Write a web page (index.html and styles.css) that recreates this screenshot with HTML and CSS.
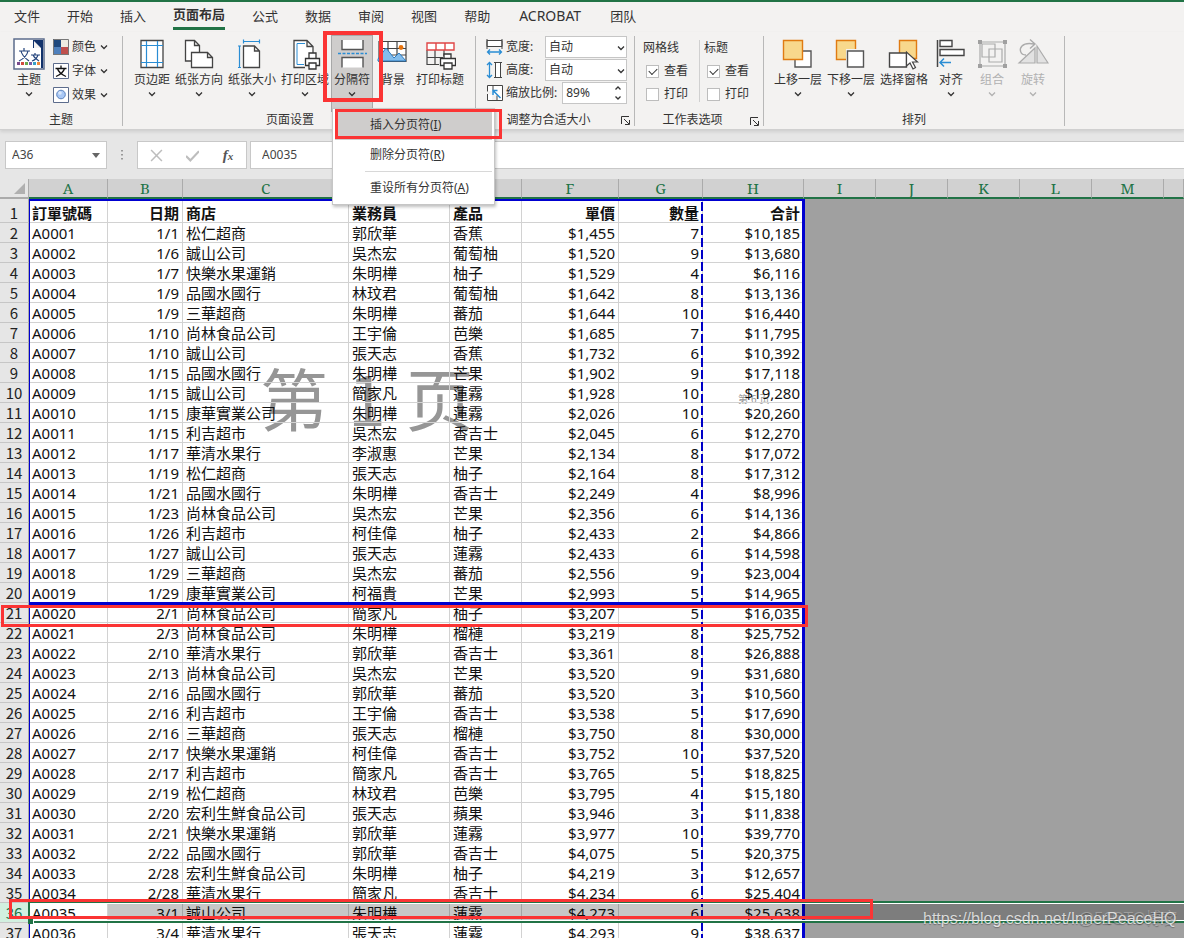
FILE: index.html
```html
<!DOCTYPE html>
<html lang="zh-CN">
<head>
<meta charset="utf-8">
<title>工作表 - 分页预览</title>
<link rel="stylesheet" href="styles.css">
</head>
<body>
<svg class="defs" aria-hidden="true">
  <symbol id="chev" viewBox="0 0 8 6"><path d="M1 1.5l3 3 3-3" fill="none" stroke="currentColor" stroke-width="1.3"/></symbol>
  <symbol id="launch" viewBox="0 0 9 9"><path d="M.5 8V.5H8M3 3l5 5M8.500 4v4.500H4" fill="none" stroke="currentColor"/></symbol>
</svg>
<div class="app">
  <nav class="tabs">
    <button class="tab">文件</button>
    <button class="tab">开始</button>
    <button class="tab">插入</button>
    <button class="tab active">页面布局</button>
    <button class="tab">公式</button>
    <button class="tab">数据</button>
    <button class="tab">审阅</button>
    <button class="tab">视图</button>
    <button class="tab">帮助</button>
    <button class="tab latin">ACROBAT</button>
    <button class="tab">团队</button>
  </nav>

  <div class="ribbon">
    <section class="group g-theme">
      <div class="tools">
        <button class="big">
          <svg class="ico" viewBox="0 0 32 32"><rect x="1" y="1" width="30" height="30" fill="#fff" stroke="#5c6c8c" stroke-width="1.500"/><path d="M20 2h10v28h-2V10h-8z" fill="#12326b"/><path d="M21 3v7h7z" fill="#f3f2f1"/><path d="M6 13h11M11 10v3M8 13c1 5 4 7 8 10M15 13c-1 5-5 8-9 10M18 17h9M22 15v2M20 17c1 3 3 4 6 6M25 17c-1 3-3 5-6 6" fill="none" stroke="#24447c" stroke-width="1.200"/><path d="M4 24h3v3H4z" fill="#7a4a8c"/><path d="M8 24h3v3H8z" fill="#d24a40"/><path d="M12 24h3v3h-3z" fill="#6aa84f"/><path d="M16 24h3v3h-3z" fill="#7a5aa8"/><path d="M20 24h3v3h-3z" fill="#38a0c8"/><path d="M24 24h3v3h-3z" fill="#f0883a"/></svg>
          <span>主题</span><svg class="chev"><use href="#chev"/></svg>
        </button>
        <div class="stack">
          <button class="small"><svg class="ico16" viewBox="0 0 16 16"><path d="M0 0h8v8H0z" fill="#1f497d"/><path d="M8 0h8v8H8z" fill="#eeece1"/><path d="M0 8h8v8H0z" fill="#4f81bd"/><path d="M8 8h8v8H8z" fill="#c0504d"/><path d="M.5.5h15v15H.5z" fill="none" stroke="#777"/></svg><span>颜色</span><svg class="chev"><use href="#chev"/></svg></button>
          <button class="small"><svg class="ico16" viewBox="0 0 16 16"><path d="M.5.5h15v15H.5z" fill="#fff" stroke="#5c6c8c"/><path d="M2.500 5.500h11M8 2.500v3M4.500 5.500c1 4 4 6 8.500 8M11.500 5.500c-1 4-4 6-8.500 8" fill="none" stroke="#111" stroke-width="1.300"/></svg><span>字体</span><svg class="chev"><use href="#chev"/></svg></button>
          <button class="small"><svg class="ico16" viewBox="0 0 16 16"><path d="M.5.5h15v15H.5z" fill="#fff" stroke="#5c6c8c"/><circle cx="8" cy="7.500" r="4.300" fill="#a9c8f5" stroke="#5b82bd"/><circle cx="7" cy="6" r="1.800" fill="#d9e8fc"/></svg><span>效果</span><svg class="chev"><use href="#chev"/></svg></button>
        </div>
      </div>
      <div class="caption"><span>主题</span></div>
    </section>

    <section class="group g-page">
      <div class="tools">
        <button class="big"><svg class="ico" viewBox="0 0 32 32"><path d="M5 2.500h22v27H5z" fill="#fff" stroke="#444" stroke-width="1.300"/><path d="M10.500 3v26M21.500 3v26M5 7.500h22M5 24.500h22" stroke="#2a8dd4" stroke-width="1.200"/></svg><span>页边距</span><svg class="chev"><use href="#chev"/></svg></button>
        <button class="big"><svg class="ico" viewBox="0 0 32 32"><g fill="#fff" stroke="#444" stroke-width="1.300"><path d="M8 23H2.500V2.500h9l5 5V14M11.500 2.500v5h5"/><path d="M8.500 14.500h16l5 5v10h-21zM24.500 14.500v5h5"/></g></svg><span>纸张方向</span><svg class="chev"><use href="#chev"/></svg></button>
        <button class="big"><svg class="ico" viewBox="0 0 32 32"><path d="M7.500 8h11l5 5v16.500h-16zM18.500 8v5h5" fill="#fff" stroke="#444" stroke-width="1.300"/><path d="M7.500 3.500h16M7.500 1.500v4M23.500 1.500v4M3.500 8v21M2 8h3M2 29.500h3" fill="none" stroke="#2a8dd4" stroke-width="1.200"/></svg><span>纸张大小</span><svg class="chev"><use href="#chev"/></svg></button>
        <button class="big"><svg class="ico" viewBox="0 0 32 32"><path d="M16 29.500H5V2.500h13l6 6V16M18 2.500v6h6" fill="#fff" stroke="#444" stroke-width="1.300"/><path d="M15 26.500H8v-21h8" fill="none" stroke="#2a8dd4"/><g fill="#fff" stroke="#333" stroke-width="1.300"><path d="M20 20v-5h7v5"/><path d="M16.500 20.500h14v7h-14z"/><path d="M20 25h7v6h-7z"/></g></svg><span>打印区域</span><svg class="chev"><use href="#chev"/></svg></button>
        <button class="big pressed"><svg class="ico" viewBox="0 0 32 32"><path d="M6 2v9.500h21V2M6 29.500V19.500h21v10" fill="#fff" stroke="#555" stroke-width="1.400"/><path d="M2 15.500h29" stroke="#2a8dd4" stroke-width="1.300" stroke-dasharray="3 1.500"/></svg><span>分隔符</span><svg class="chev"><use href="#chev"/></svg></button>
        <button class="big back"><svg class="ico" viewBox="0 0 32 32"><path d="M2 3.500h27v20H2zM11 3v20M20 3v20M2 10.500h27M2 17h27" fill="#fff" stroke="#444" stroke-width="1.200"/><path d="M1 21l8-11 8 10 5-5 7 8H1z" fill="#83bdec" stroke="#2a7bc0"/><circle cx="24" cy="9.500" r="2.400" fill="#e8730c"/></svg><span>背景</span></button>
        <button class="big"><svg class="ico" viewBox="0 0 32 32"><path d="M3 12v14.500h12M11 12v14M3 19.500h16M20 12v6" fill="none" stroke="#444" stroke-width="1.200"/><path d="M3 5h27v7H3zM12 5v7M21 5v7" fill="#fff" stroke="#e04646" stroke-width="1.400"/><g fill="#fff" stroke="#333" stroke-width="1.300"><path d="M20 20v-4h7v4"/><path d="M16.500 20.500h15v7h-15z"/><path d="M20 25h8v6h-8z"/></g></svg><span>打印标题</span></button>
      </div>
      <div class="caption"><span>页面设置</span></div>
    </section>

    <section class="group g-fit">
      <div class="fit">
        <div class="field"><svg class="ico18" viewBox="0 0 18 18"><path d="M1 8.500V2.500h15v6zM1 1v10M16 1v10" fill="#fff" stroke="#444"/><path d="M1.500 14h14M4 11.500L1.500 14 4 16.500M13 11.500l2.500 2.500-2.500 2.500" fill="none" stroke="#2a8dd4" stroke-width="1.300"/></svg><label for="w">宽度:</label><span class="pick"><select id="w"><option>自动</option></select><svg class="chev"><use href="#chev"/></svg></span></div>
        <div class="field"><svg class="ico18" viewBox="0 0 18 18"><path d="M8 1.500h8M8 16.500h8M9.500 1.500h5v15h-5z" fill="#fff" stroke="#444"/><path d="M3.500 1.500v15M1 4l2.500-2.500L6 4M1 14l2.500 2.500L6 14" fill="none" stroke="#2a8dd4" stroke-width="1.300"/></svg><label for="h">高度:</label><span class="pick"><select id="h"><option>自动</option></select><svg class="chev"><use href="#chev"/></svg></span></div>
        <div class="field"><svg class="ico18" viewBox="0 0 18 18"><path d="M6 1.500h10.500v15H6M1.500 7.500V1.500H7v5M1.500 10v6.500H11v-5" fill="#fff" stroke="#444"/><path d="M14.500 14L7 6.500M7 11V6.500h4.500" fill="none" stroke="#2a8dd4" stroke-width="1.500"/></svg><label for="s">缩放比例:</label><span class="pick"><input id="s" value="89%"><svg class="spin" viewBox="0 0 8 16"><path d="M1.500 4.500L4 2l2.500 2.500M1.500 11.500L4 14l2.500-2.500" fill="none" stroke="#333" stroke-width="1.300"/></svg></span></div>
      </div>
      <div class="caption"><span>调整为合适大小</span><button class="launch" aria-label="页面设置"><svg><use href="#launch"/></svg></button></div>
    </section>

    <section class="group g-opts">
      <div class="opts">
        <div class="optcol"><span>网格线</span><label><input type="checkbox" checked>查看</label><label><input type="checkbox">打印</label></div>
        <div class="optcol"><span>标题</span><label><input type="checkbox" checked>查看</label><label><input type="checkbox">打印</label></div>
      </div>
      <div class="caption"><span>工作表选项</span><button class="launch" aria-label="工作表选项"><svg><use href="#launch"/></svg></button></div>
    </section>

    <section class="group g-arr">
      <div class="tools">
        <button class="big"><svg class="ico" viewBox="0 0 32 32"><path d="M13 13h16v16H13z" fill="#fff" stroke="#555" stroke-width="1.400"/><path d="M1.500 2.500h19v19h-19z" fill="#f8d88c" stroke="#e07b12" stroke-width="1.400"/></svg><span>上移一层</span><svg class="chev"><use href="#chev"/></svg></button>
        <button class="big"><svg class="ico" viewBox="0 0 32 32"><path d="M1.500 2.500h19v19h-19z" fill="#f8d88c" stroke="#e07b12" stroke-width="1.400"/><path d="M11 11h19v20H11z" fill="#f3f2f1"/><path d="M12.500 13h16v16h-16z" fill="#fff" stroke="#555" stroke-width="1.400"/></svg><span>下移一层</span><svg class="chev"><use href="#chev"/></svg></button>
        <button class="big"><svg class="ico" viewBox="0 0 32 32"><path d="M11.500 2.500h17v18h-17z" fill="#f8d88c" stroke="#e07b12" stroke-width="1.400"/><path d="M1.500 15h17v14h-17z" fill="#fff" stroke="#444" stroke-width="1.400"/><path d="M18.500 14v14l3.500-3 3 6 2.500-1.500-3-5.500h5z" fill="#fff" stroke="#444" stroke-width="1.200"/></svg><span>选择窗格</span></button>
        <button class="big"><svg class="ico" viewBox="0 0 32 32"><path d="M2.500 2v27" stroke="#444" stroke-width="1.500"/><path d="M5 2.500h12v6H5zM5 11.500h24v6H5z" fill="#fff" stroke="#444" stroke-width="1.400"/><path d="M16 24.500H5M9 20.500l-4 4 4 4" fill="none" stroke="#2a8dd4" stroke-width="1.500"/></svg><span>对齐</span><svg class="chev"><use href="#chev"/></svg></button>
        <button class="big" disabled><svg class="ico" viewBox="0 0 32 32"><path d="M4 4h25v24H4zM6 6h13v13H6zM13 11h13v13H13z" fill="none" stroke="#ababab" stroke-width="1.200"/><path d="M2 2h4v4H2zM27 2h4v4h-4zM2 26h4v4H2zM27 26h4v4h-4z" fill="#a0a0a0"/></svg><span>组合</span><svg class="chev"><use href="#chev"/></svg></button>
        <button class="big" disabled><svg class="ico" viewBox="0 0 32 32"><path d="M2 25l16-15v15zM20 8l11 17H20z" fill="#e2e2e2" stroke="#ababab" stroke-width="1.200"/><path d="M9 17c-6 0-7-6-4-9s7-3 12-2M13 1.500l5 4.500-5 4.500" fill="none" stroke="#ababab" stroke-width="1.400"/></svg><span>旋转</span><svg class="chev"><use href="#chev"/></svg></button>
      </div>
      <div class="caption"><span>排列</span></div>
    </section>
  </div>

  <div class="formula">
    <div class="namebox"><input aria-label="名称框" value="A36"><svg viewBox="0 0 8 5"><path d="M0 0h8L4 5z" fill="#666"/></svg></div>
    <svg class="dots" viewBox="0 0 2 12"><path d="M0 1h2v1.500H0zM0 5h2v1.500H0zM0 9h2v1.500H0z" fill="#999"/></svg>
    <div class="fxbox">
      <button aria-label="取消"><svg viewBox="0 0 12 12"><path d="M1 1l10 10M11 1L1 11" stroke="#bdbdbd" stroke-width="1.400"/></svg></button>
      <button aria-label="输入"><svg viewBox="0 0 12 12"><path d="M0 6.500l4 4L12 2" fill="none" stroke="#bdbdbd" stroke-width="2"/></svg></button>
      <button class="fx" aria-label="插入函数">f<small>x</small></button>
    </div>
    <input class="content" aria-label="编辑栏" value="A0035">
  </div>

  <main class="sheet">
    <span class="mark mark-1"><span>第</span><span>1</span><span>页</span></span>
    <span class="mark mark-6"><span>第</span><span>6</span><span>页</span></span>
    <table class="grid">
      <colgroup><col class="c-n"><col class="c-a"><col class="c-b"><col class="c-c"><col class="c-d"><col class="c-e"><col class="c-f"><col class="c-g"><col class="c-h"><col class="c-i"><col class="c-i"><col class="c-i"><col class="c-i"><col class="c-i"><col></colgroup>
      <thead><tr><th class="corner"><svg viewBox="0 0 11 11"><path d="M11 0v11H0z" fill="#b0b0b0"/></svg></th><th>A</th><th>B</th><th>C</th><th>D</th><th>E</th><th>F</th><th>G</th><th>H</th><th>I</th><th>J</th><th>K</th><th>L</th><th>M</th><th></th></tr></thead>
      <tbody id="rows"></tbody>
    </table>
    <div class="print-area"></div>
    <div class="page-break-v"></div>
    <div class="page-break-h"></div>
    <div class="selection"><i></i></div>
    <div class="hl hl-21"></div>
    <div class="hl hl-36"></div>
  </main>

  <div class="menu">
    <button class="hot">插入分页符(<u>I</u>)</button>
    <button>删除分页符(<u>R</u>)</button>
    <hr>
    <button>重设所有分页符(<u>A</u>)</button>
  </div>
  <div class="hl hl-button"></div>
  <div class="hl hl-menu"></div>
  <span class="credit credit-b">@51CTO博客</span>
  <span class="credit">https://blog.csdn.net/InnerPeaceHQ</span>
</div>
<script src="app.js"></script>
</body>
</html>
```
FILE: styles.css
```css
* { box-sizing: border-box; }
body {
  margin: 0;
  height: 100vh;
  overflow: hidden;
  background: #a0a0a0;
  color: #333;
  font: 12px/16px "Noto Sans", "Noto Sans CJK SC", sans-serif;
}
button, input, select { font: inherit; color: inherit; border: 0; padding: 0; margin: 0; background: none; border-radius: 0; }
.defs { position: absolute; width: 0; height: 0; }
.app { position: relative; height: 100vh; overflow: hidden; }
.chev { width: 8px; height: 6px; flex: none; }

.tabs { display: flex; gap: 27px; height: 32px; padding: 0 14px; border-top: 2px solid #217346; background: #f3f2f1; font-size: 13px; align-items: stretch; }
.tab { padding-bottom: 2px; white-space: nowrap; }
.tab.latin { font-size: 14px; margin: 0 2px; }
.tab.active { font-weight: 700; border-bottom: 3px solid #217346; height: 28px; padding: 0; line-height: 25px; }

.ribbon { display: flex; height: 98px; padding-top: 4px; background: #f3f2f1; border-bottom: 1px solid #d0d0d0; box-shadow: 0 2px 3px #d0d0d0; position: relative; }
.group { display: flex; flex-direction: column; height: 90px; border-right: 1px solid #b8b8b8; flex: none; }
.g-theme { width: 123px; }
.g-page { width: 353px; }
.g-fit { width: 159px; }
.g-opts { width: 129px; }
.g-arr { width: 301px; }
.tools { display: flex; gap: 1px; height: 75px; padding-left: 8px; }
.g-page .tools { padding-left: 9px; }
.caption { display: flex; height: 15px; line-height: 18px; }
.caption span { flex: 1; text-align: center; white-space: nowrap; }
.g-page .caption { padding-right: 18px; }
.launch { width: 13px; height: 16px; padding-top: 5px; }
.launch svg { width: 9px; height: 9px; display: block; }
.big { display: flex; flex-direction: column; align-items: center; min-width: 40px; padding: 2px 2px 0; white-space: nowrap; }
.big .ico { width: 32px; height: 32px; flex: none; }
.big span { margin: 2px 0 3px; }
.big:disabled { color: #b1b1b1; }
.pressed { background: #cfcdcc; box-shadow: 0 0 0 1px #a8a8a8; }
.g-theme .tools { padding-left: 9px; }
.stack { display: flex; flex-direction: column; gap: 8px; padding: 3px 0 0 3px; }
.small { display: flex; align-items: center; gap: 3px; height: 16px; }
.small .chev { margin-left: 1px; }
.ico16 { width: 16px; height: 16px; }
.ico18 { width: 18px; height: 18px; margin-right: 2px; flex: none; }

.ribbon .fit { height: 75px; margin-top: -1px; padding: 0 7px 0 10px; display: flex; flex-direction: column; }
.g-fit .caption { height: 16px; line-height: 20px; }
.field { display: flex; align-items: center; height: 23px; white-space: nowrap; }
.field label { flex: none; margin-right: 5px; }
.pick { position: relative; margin-left: auto; display: flex; }
.pick select, .pick input { width: 82px; height: 22px; border: 1px solid #c6c6c6; background: #fff; appearance: none; padding: 0 3px; }
.pick input { width: 65px; }
.pick .chev { position: absolute; right: 2px; top: 9px; pointer-events: none; }
.spin { position: absolute; right: 5px; top: 3px; width: 8px; height: 16px; }

.opts { display: flex; height: 75px; padding: 4px 0 0 8px; }
.optcol { display: flex; flex-direction: column; gap: 7px; width: 56px; height: 62px; white-space: nowrap; }
.optcol + .optcol { border-left: 1px solid #d0d0d0; padding-left: 4px; width: 60px; }
.optcol label { display: flex; align-items: center; gap: 5px; padding-left: 3px; height: 16px; }
.optcol input { appearance: none; width: 13px; height: 13px; border: 1px solid #bdbdbd; background: #fff; display: grid; place-items: center; }
.optcol input:checked::before { content: ""; width: 7px; height: 4px; border: solid #333; border-width: 0 0 1px 1px; transform: translateY(-1px) rotate(-45deg); }

.formula { display: flex; height: 49px; padding: 11px 0 10px 5px; background: #e6e6e6; color: #444; }
.formula > div, .content { background: #fff; border: 1px solid #c8c8c8; }
.namebox { width: 102px; display: flex; align-items: center; padding: 0 6px; }
.namebox input { flex: 1; min-width: 0; }
.namebox svg { width: 8px; height: 5px; }
.dots { width: 2px; height: 12px; margin: 8px 14px; }
.fxbox { width: 110px; display: flex; align-items: center; justify-content: space-around; }
.fxbox button { width: 24px; }
.fxbox svg { width: 13px; height: 13px; display: block; margin: auto; }
.fxbox .fx { font: italic 700 15px/16px "Liberation Serif", serif; color: #555; }
.fx small { font-size: 11px; }
.content { flex: 1; margin-left: 3px; padding: 0 11px; border-right: 0; }

.sheet { position: relative; background: linear-gradient(90deg, #fff 804px, #a0a0a0 804px); font: 15px/18px "Noto Sans", "Noto Sans CJK TC", sans-serif; color: #111; }
.grid { position: relative; width: 100%; table-layout: fixed; border-collapse: separate; border-spacing: 0; }
.c-n { width: 29px; } .c-a { width: 79px; } .c-b { width: 75px; } .c-c { width: 166px; } .c-d { width: 101px; }
.c-e { width: 72px; } .c-f { width: 97px; } .c-g { width: 84px; } .c-h { width: 101px; } .c-i { width: 72px; }
.grid th, .grid td { padding: 0 3px; white-space: nowrap; overflow: hidden; text-align: left; height: 20px; }
.grid thead th { background: #d1d1d1; color: #217346; font: 400 15px/17px "Noto Serif", "Liberation Serif", serif; text-align: center; border-right: 1px solid #ababab; border-bottom: 2px solid #217346; height: 20px; padding-top: 1px; }
.grid thead .corner { background: #e6e6e6; text-align: right; border-bottom-color: #ababab; }
.corner svg { width: 11px; height: 11px; display: inline-block; }
.grid tbody td { border-right: 1px solid #d2d2d2; border-bottom: 1px solid #d2d2d2; }
.grid tbody th { background: #e6e6e6; color: #222; font: 400 15px/18px "Noto Sans CJK TC", sans-serif; text-align: center; border-right: 1px solid #ababab; border-bottom: 1px solid #c6c6c6; padding: 0; }
.grid tbody td.num { text-align: right; }
.grid tbody td.outside { border: 0; }
.grid .head td { font-weight: 700; height: 24px; padding-top: 5px; }
.grid tbody .head th { padding-top: 5px; }
.grid tbody .current th { background: #d2f0e0; color: #217346; }

.mark { position: absolute; display: flex; color: #969696; white-space: nowrap; font-family: "Noto Sans CJK SC", sans-serif; font-weight: 400; }
.mark-1 { left: 260px; top: 178px; gap: 20px; font-size: 68px; line-height: 80px; }
.mark-6 { left: 738px; top: 214px; gap: 3px; font-size: 10px; line-height: 12px; }
.print-area { position: absolute; left: 29px; top: 20px; width: 776px; bottom: 0; border: solid #0000d0; border-width: 2px 3px 0 1px; }
.page-break-v { position: absolute; left: 701px; top: 23px; width: 2px; bottom: 0; background: repeating-linear-gradient(#0000c8 0 9px, transparent 9px 12px); }
.page-break-h { position: absolute; left: 29px; top: 423px; width: 775px; height: 3px; background: #0000d0; }
.selection { position: absolute; left: 28px; right: 0; top: 722px; height: 22px; border: solid #217346; border-width: 2px 0 2px 2px; background: linear-gradient(90deg, transparent 78px, rgba(0, 0, 0, .22) 78px); box-shadow: inset 0 1px #fff, inset 0 -1px #fff; }
.selection i { position: absolute; left: -2px; bottom: -3px; width: 6px; height: 6px; background: #217346; border: solid #fff; border-width: 0 1px 0 0; }
.hl { position: absolute; border: 3px solid #fb3434; pointer-events: none; }
.hl-21 { left: 1px; top: 426px; width: 807px; height: 22px; }
.hl-36 { left: 9px; top: 720px; width: 864px; height: 20px; }
.hl-button { left: 323px; top: 31px; width: 60px; height: 71px; border-width: 4px; }
.hl-menu { left: 335px; top: 109px; width: 167px; height: 30px; }

.menu { position: absolute; left: 332px; top: 108px; width: 163px; padding: 1px 2px; display: flex; flex-direction: column; background: #fff; border: 1px solid #c6c6c6; box-shadow: 1px 2px 3px rgba(0, 0, 0, .25); }
.menu button { height: 30px; padding-left: 35px; text-align: left; white-space: nowrap; }
.menu .hot { background: #cfcdcc; }
.menu hr { width: 127px; margin: 1px 0; margin-left: auto; border: 0; border-top: 1px solid #d8d8d8; }
.credit { position: absolute; left: 923px; top: 909px; font: 16px/20px "Liberation Sans", sans-serif; color: rgba(255, 255, 255, .75); text-shadow: 0 1px 1px rgba(0, 0, 0, .3); white-space: nowrap; }
.credit-b { left: 1078px; font-family: "Liberation Sans", "Noto Sans CJK SC", sans-serif; color: rgba(225, 225, 225, .4); }
```
FILE: app.js
```javascript
const data = `訂單號碼|日期|商店|業務員|產品|單價|數量|合計
A0001|1/1|松仁超商|郭欣華|香蕉|$1,455|7|$10,185
A0002|1/6|誠山公司|吳杰宏|葡萄柚|$1,520|9|$13,680
A0003|1/7|快樂水果運銷|朱明樺|柚子|$1,529|4|$6,116
A0004|1/9|品國水國行|林玟君|葡萄柚|$1,642|8|$13,136
A0005|1/9|三華超商|朱明樺|蕃茄|$1,644|10|$16,440
A0006|1/10|尚林食品公司|王宇倫|芭樂|$1,685|7|$11,795
A0007|1/10|誠山公司|張天志|香蕉|$1,732|6|$10,392
A0008|1/15|品國水國行|朱明樺|芒果|$1,902|9|$17,118
A0009|1/15|誠山公司|簡家凡|蓮霧|$1,928|10|$19,280
A0010|1/15|康華實業公司|朱明樺|蓮霧|$2,026|10|$20,260
A0011|1/15|利吉超市|吳杰宏|香吉士|$2,045|6|$12,270
A0012|1/17|華清水果行|李淑惠|芒果|$2,134|8|$17,072
A0013|1/19|松仁超商|張天志|柚子|$2,164|8|$17,312
A0014|1/21|品國水國行|朱明樺|香吉士|$2,249|4|$8,996
A0015|1/23|尚林食品公司|吳杰宏|芒果|$2,356|6|$14,136
A0016|1/26|利吉超市|柯佳偉|柚子|$2,433|2|$4,866
A0017|1/27|誠山公司|張天志|蓮霧|$2,433|6|$14,598
A0018|1/29|三華超商|吳杰宏|蕃茄|$2,556|9|$23,004
A0019|1/29|康華實業公司|柯福貴|芒果|$2,993|5|$14,965
A0020|2/1|尚林食品公司|簡家凡|柚子|$3,207|5|$16,035
A0021|2/3|尚林食品公司|朱明樺|榴槤|$3,219|8|$25,752
A0022|2/10|華清水果行|郭欣華|香吉士|$3,361|8|$26,888
A0023|2/13|尚林食品公司|吳杰宏|芒果|$3,520|9|$31,680
A0024|2/16|品國水國行|郭欣華|蕃茄|$3,520|3|$10,560
A0025|2/16|利吉超市|王宇倫|香吉士|$3,538|5|$17,690
A0026|2/16|三華超商|張天志|榴槤|$3,750|8|$30,000
A0027|2/17|快樂水果運銷|柯佳偉|香吉士|$3,752|10|$37,520
A0028|2/17|利吉超市|簡家凡|香吉士|$3,765|5|$18,825
A0029|2/19|松仁超商|林玟君|芭樂|$3,795|4|$15,180
A0030|2/20|宏利生鮮食品公司|張天志|蘋果|$3,946|3|$11,838
A0031|2/21|快樂水果運銷|郭欣華|蓮霧|$3,977|10|$39,770
A0032|2/22|品國水國行|郭欣華|香吉士|$4,075|5|$20,375
A0033|2/28|宏利生鮮食品公司|朱明樺|柚子|$4,219|3|$12,657
A0034|2/28|華清水果行|簡家凡|香吉士|$4,234|6|$25,404
A0035|3/1|誠山公司|朱明樺|蓮霧|$4,273|6|$25,638
A0036|3/4|華清水果行|張天志|蓮霧|$4,293|9|$38,637`;

const numeric = new Set([1, 5, 6, 7]);
const body = document.getElementById("rows");

data.split("\n").forEach((line, index) => {
  const row = body.insertRow();
  if (index === 0) row.className = "head";
  if (index === 35) row.className = "current";
  const header = document.createElement("th");
  header.scope = "row";
  header.textContent = index + 1;
  row.append(header);
  line.split("|").forEach((value, column) => {
    const cell = row.insertCell();
    cell.textContent = value;
    if (numeric.has(column)) cell.className = "num";
  });
  const outside = row.insertCell();
  outside.colSpan = 6;
  outside.className = "outside";
});
```
